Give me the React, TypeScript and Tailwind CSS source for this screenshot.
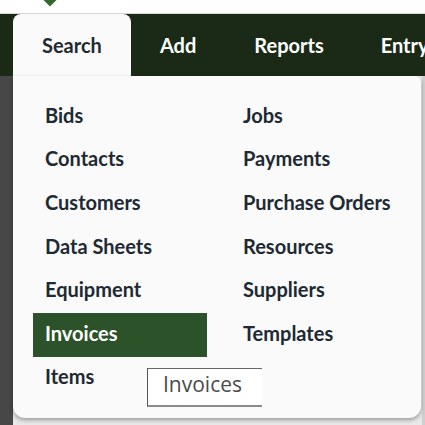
const left = ['Bids', 'Contacts', 'Customers', 'Data Sheets', 'Equipment', 'Invoices', 'Items']
const right = ['Jobs', 'Payments', 'Purchase Orders', 'Resources', 'Suppliers', 'Templates']

function MenuItem({ label, active }: { label: string; active?: boolean }) {
  return (
    <div
      className={
        'flex h-[43.6px] items-center pb-[4px] pl-3 ' +
        (active ? 'bg-[#2b5228] text-white' : 'text-[#1d2933]')
      }
    >
      {label}
    </div>
  )
}

export default function App() {
  return (
    <div className="relative h-[425px] w-[425px] overflow-hidden bg-[#e9e9e9] font-['Lato',sans-serif]">
      {/* top strip with the active marker */}
      <div className="relative h-[14px] border-b border-[#d6d6d6] bg-white">
        <div className="absolute left-[44px] top-[-8px] h-[12px] w-[12px] rotate-45 bg-[#2f6a2c]" />
      </div>

      {/* nav bar */}
      <nav className="flex h-[62px] items-stretch whitespace-nowrap bg-[#1a2a17] pl-[13px] text-[20px] font-bold text-white">
        <div className="flex items-center rounded-t-lg bg-[#fafafa] px-[29px] text-[#1d2933]">Search</div>
        <div className="flex items-center px-[29px]">Add</div>
        <div className="flex items-center px-[29px]">Reports</div>
        <div className="flex items-center pl-[28px]">Entry</div>
      </nav>

      <div className="flex h-[349px]">
        <div className="w-[13px] bg-[#474747]" />
        {/* dropdown panel */}
        <div className="relative h-[342px] w-[408px] rounded-b-xl rounded-tr-md bg-[#fafafa] shadow-[0_2px_4px_rgba(0,0,0,0.35)]">
          <div className="grid grid-cols-[174px_174px] gap-x-6 pl-5 pt-[19px] text-[20px] font-bold">
            <div className="flex flex-col">
              {left.map((l) => (
                <MenuItem key={l} label={l} active={l === 'Invoices'} />
              ))}
            </div>
            <div className="flex flex-col">
              {right.map((r) => (
                <MenuItem key={r} label={r} />
              ))}
            </div>
          </div>

          {/* tooltip */}
          <div className="absolute left-[134px] top-[292px] flex h-[39px] w-[115px] items-center border-b-2 border-l border-t border-b-[#8a8a8a] border-l-[#555] border-t-[#666] bg-white pb-[5px] pl-[15px] font-['Open_Sans',sans-serif] text-[21px] font-normal text-[#4a4a4a]">
            Invoices
          </div>
        </div>
        <div className="ml-[1px] w-[3px] bg-[#cfcfcf]" />
      </div>
    </div>
  )
}
